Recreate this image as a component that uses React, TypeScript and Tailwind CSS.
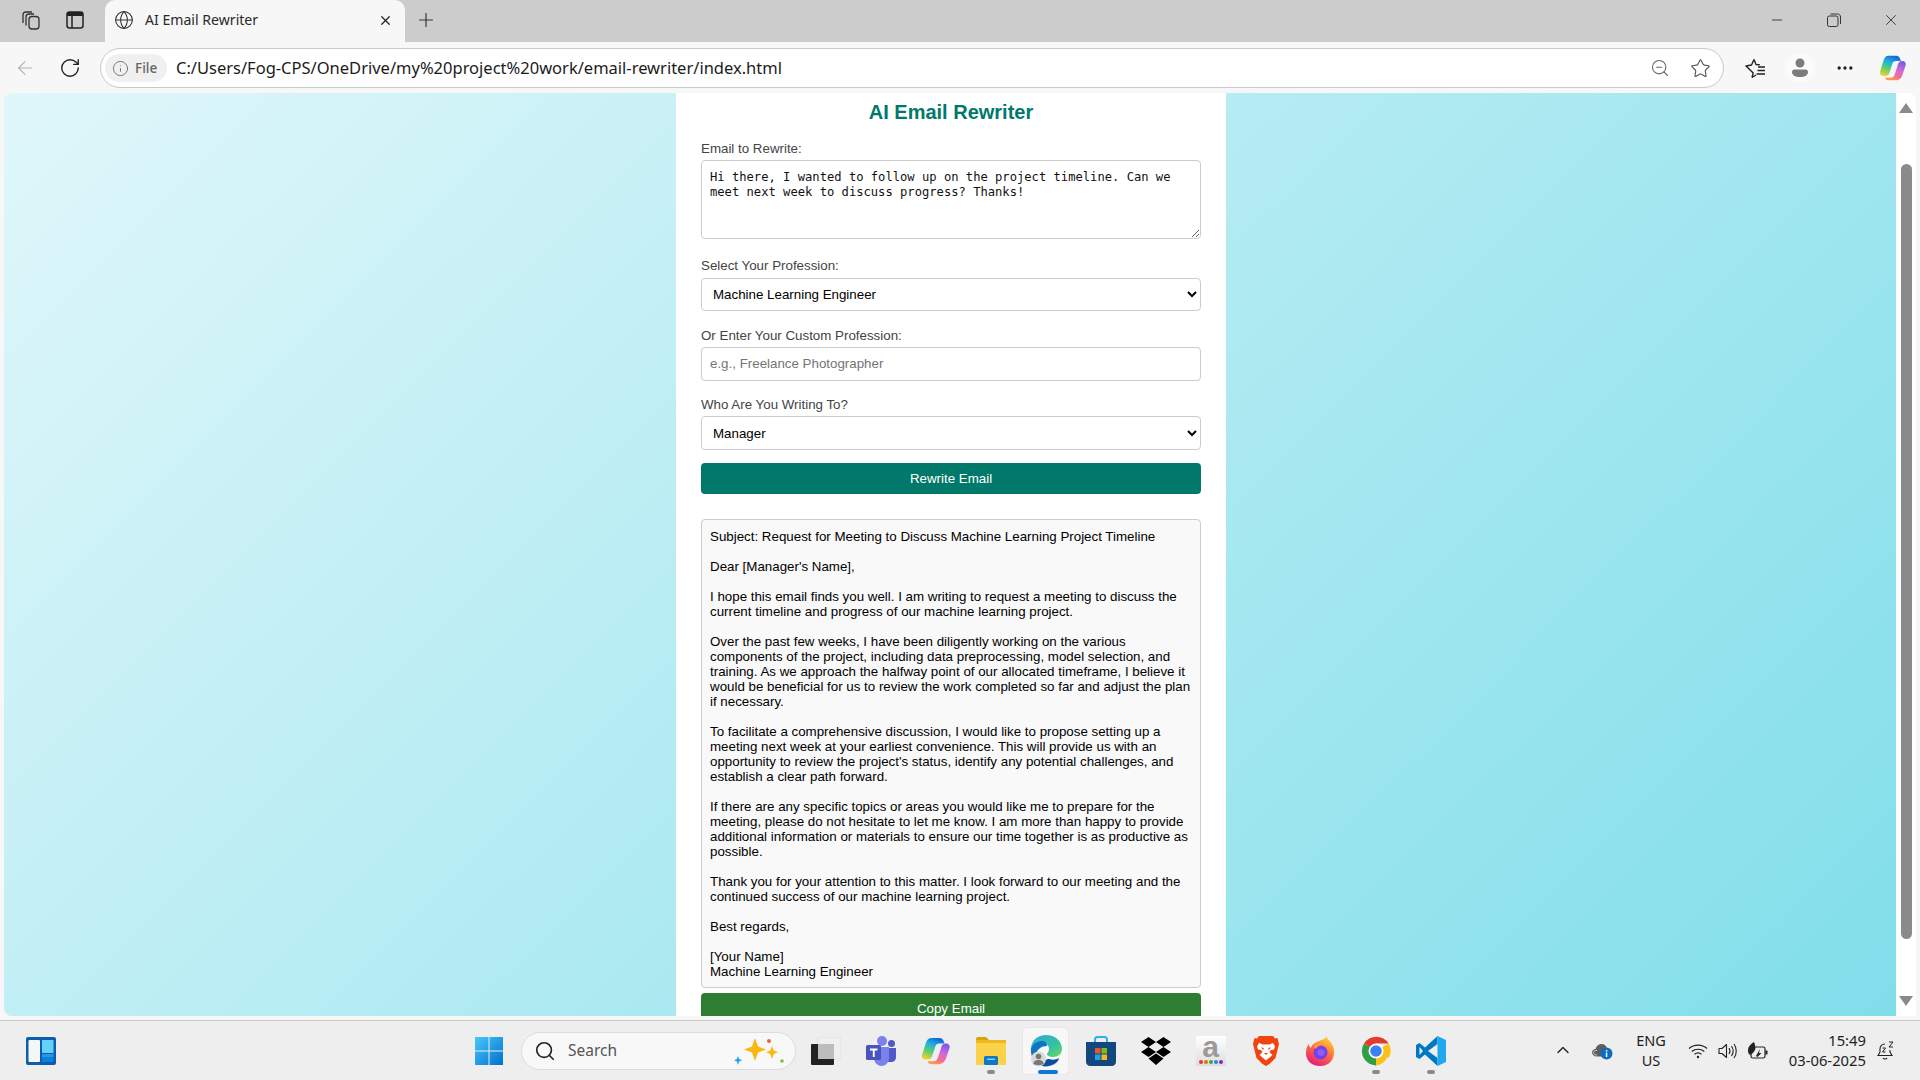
import { ArrowLeft, ChevronUp, Info, MoreHorizontal, Plus, RotateCw, Search, Star, X, ZoomOut, Globe, Minus } from 'lucide-react';

const EMAIL_INPUT =
  'Hi there, I wanted to follow up on the project timeline. Can we meet next week to discuss progress? Thanks!';

const EMAIL_OUTPUT = `Subject: Request for Meeting to Discuss Machine Learning Project Timeline

Dear [Manager's Name],

I hope this email finds you well. I am writing to request a meeting to discuss the current timeline and progress of our machine learning project.

Over the past few weeks, I have been diligently working on the various components of the project, including data preprocessing, model selection, and training. As we approach the halfway point of our allocated timeframe, I believe it would be beneficial for us to review the work completed so far and adjust the plan if necessary.

To facilitate a comprehensive discussion, I would like to propose setting up a meeting next week at your earliest convenience. This will provide us with an opportunity to review the project's status, identify any potential challenges, and establish a clear path forward.

If there are any specific topics or areas you would like me to prepare for the meeting, please do not hesitate to let me know. I am more than happy to provide additional information or materials to ensure our time together is as productive as possible.

Thank you for your attention to this matter. I look forward to our meeting and the continued success of our machine learning project.

Best regards,

[Your Name]
Machine Learning Engineer`;

function CopilotLogo({ size }: { size: number }) {
  return (
    <svg width={size} height={size} viewBox="0 0 32 32">
      <defs>
        <linearGradient id="cpA" x1="0.6" y1="0" x2="0.2" y2="1">
          <stop offset="0" stopColor="#1668d8" />
          <stop offset="0.3" stopColor="#1cb0e0" />
          <stop offset="0.65" stopColor="#5cd06a" />
          <stop offset="1" stopColor="#f8d030" />
        </linearGradient>
        <linearGradient id="cpB" x1="0.7" y1="0" x2="0.3" y2="1">
          <stop offset="0" stopColor="#7a5ce8" />
          <stop offset="0.45" stopColor="#d868d8" />
          <stop offset="0.75" stopColor="#f4708c" />
          <stop offset="1" stopColor="#f8a040" />
        </linearGradient>
      </defs>
      <path d="M11 2h9c2 0 3 1 4 3l1 3h-5c-3 0-4 1-5 4l-3 9c-1 3-2.500 4-5 4H4.500C2 25 .5 23 1 20.500L5 8c1-4 3-6 6-6z" fill="url(#cpA)" />
      <path d="M27 8c2.500 0 4 2 3.500 4.500L27 23c-1 4-4 7-8 7h-8c-2 0-3.500-1-4-3h6c3 0 4-1 5-4l3-9c1-4 2-6 6-6z" fill="url(#cpB)" />
    </svg>
  );
}

function CollectionsIcon() {
  return (
    <svg width="22" height="22" viewBox="0 0 22 22" fill="none" stroke="#333" strokeWidth="1.3">
      <path d="M4 14V6c0-2 1-3 3-3h6" />
      <path d="M7 16.500V8c0-2 1-3 3-3h5" />
      <rect x="10" y="7.500" width="10" height="12.500" rx="3" />
    </svg>
  );
}

function VerticalTabsIcon() {
  return (
    <svg width="18" height="18" viewBox="0 0 18 18">
      <rect x="1" y="1" width="16" height="16" rx="2.500" fill="none" stroke="#222" strokeWidth="1.500" />
      <path d="M1 3.500a2.500 2.500 0 0 1 2.500-2.500h11a2.500 2.500 0 0 1 2.500 2.500V5H1z" fill="#222" />
      <path d="M6 5v12" stroke="#222" strokeWidth="1.500" />
    </svg>
  );
}

function RestoreIcon() {
  return (
    <svg width="14" height="14" viewBox="0 0 14 14" fill="none" stroke="#333" strokeWidth="1">
      <rect x="0.500" y="3" width="10.500" height="10.500" rx="1.800" />
      <path d="M3.500 1h7c1.800 0 3 1.200 3 3v7" />
    </svg>
  );
}

function FavoritesIcon() {
  return (
    <svg width="21" height="21" viewBox="0 0 21 21" fill="none" stroke="#222" strokeWidth="1.400" strokeLinejoin="round">
      <path d="M9 1.500l2 5 3.800.3M7 19.500l1.200-4.500L1 8l5.500-1L9 1.500" />
      <path d="M7 19.500l4-2.500" />
      <path d="M13 9h7M12.500 12.500h7.500M11.500 16h8.500" />
    </svg>
  );
}

function ProfileBadge() {
  return (
    <div className="flex h-[28px] w-[28px] items-center justify-center rounded-full bg-[#fbfbfb]">
      <svg width="16" height="20" viewBox="0 0 16 20" fill="#7c7c7c">
        <circle cx="8" cy="5" r="4.500" />
        <path d="M0 14c0-1.500 1-2.500 2.500-2.500h11c1.500 0 2.500 1 2.500 2.500 0 3-3 5-8 5s-8-2-8-5z" />
      </svg>
    </div>
  );
}

function WidgetsIcon() {
  return (
    <svg width="30" height="28" viewBox="0 0 30 28">
      <rect width="30" height="28" rx="2" fill="#0c5ea8" />
      <rect x="2.500" y="3" width="11.500" height="22" rx="1" fill="#f4f6f8" />
      <rect x="16" y="3" width="11.500" height="13" fill="#66d0fb" />
      <rect x="16" y="17" width="11.500" height="3.500" fill="#1e9bf0" />
      <rect x="16" y="21" width="11.500" height="4" fill="#0a80e0" />
    </svg>
  );
}

function StartIcon() {
  return (
    <svg width="30" height="30" viewBox="0 0 30 30">
      <defs>
        <linearGradient id="st" x1="0" y1="0" x2="1" y2="1">
          <stop offset="0" stopColor="#48c8fa" />
          <stop offset="1" stopColor="#0070cf" />
        </linearGradient>
      </defs>
      <path d="M1 1h13.500v13.500H1zM15.500 1H29v13.500H15.500zM1 15.500h13.500V29H1zM15.500 15.500H29V29H15.500z" fill="url(#st)" />
    </svg>
  );
}

function SparkleIcon() {
  return (
    <svg width="50" height="30" viewBox="0 0 50 30">
      <path d="M21 2l3 8.500 8 3-8 3-3 8.500-3-8.500-8-3 8-3z" fill="#fbb70d" />
      <path d="M38 10l1.800 4.500 4.200 1.800-4.200 1.800L38 23l-1.800-4.900-4.200-1.800 4.200-1.800z" fill="#fbb70d" />
      <path d="M4 20l1.200 3 3 1.200-3 1.200L4 29l-1.200-3.600-2.800-1.200 2.800-1.200z" fill="#25a5ee" />
      <circle cx="35" cy="5" r="2" fill="#ec6240" />
      <circle cx="48" cy="25" r="1.800" fill="#7cbf3c" />
    </svg>
  );
}

function TaskViewIcon() {
  return (
    <svg width="30" height="28" viewBox="0 0 30 28">
      <rect x="7" y="0" width="23" height="22" rx="1" fill="#efefef" stroke="#dfdfdf" />
      <rect x="0" y="7" width="23" height="21" rx="1" fill="#222" />
      <rect x="7" y="7" width="16" height="15" fill="#bdbdbd" />
    </svg>
  );
}

function TeamsIcon() {
  return (
    <svg width="30" height="30" viewBox="0 0 30 30">
      <circle cx="16" cy="5" r="5" fill="#7b83eb" />
      <circle cx="25.500" cy="7.500" r="3.500" fill="#5059c9" />
      <path d="M20 12h10v9c0 3-2 5-5 5h-5z" fill="#5059c9" />
      <path d="M8 11h15v11c0 4-3 8-7.500 8S8 26 8 22z" fill="#7b83eb" />
      <rect x="0" y="9" width="15" height="15" rx="1.500" fill="#4b53bc" />
      <path d="M4 12.500h7.500v2H8.700V21H6.800v-6.500H4z" fill="#fff" />
    </svg>
  );
}

function ExplorerIcon() {
  return (
    <svg width="30" height="28" viewBox="0 0 30 28">
      <path d="M0 2c0-1 .7-2 2-2h8l3 3h-13z" fill="#d9a208" />
      <path d="M0 3h30v25H0z" fill="#fbd34b" />
      <path d="M0 3h30v3H0z" fill="#eeb91e" />
      <rect x="8" y="19" width="14" height="9" rx="1.500" fill="#0f77c4" />
      <rect x="11" y="21.500" width="8" height="1.500" fill="#7fd0f7" />
    </svg>
  );
}

function EdgeProfileIcon() {
  return (
    <svg width="32" height="32" viewBox="0 0 32 32">
      <defs>
        <linearGradient id="edgeA" x1="0" y1="0" x2="1" y2="1">
          <stop offset="0" stopColor="#30a7e0" />
          <stop offset="0.6" stopColor="#35c1a4" />
          <stop offset="1" stopColor="#6bdc58" />
        </linearGradient>
      </defs>
      <path d="M1 13C2 5 8 0 16 0c9 0 16 6 16 14 0 5-4 8-9 8-3 0-6-1-6-3 0-1 2-2 2-5 0-4-3-6-7-6-5 0-9 2-11 5z" fill="url(#edgeA)" />
      <path d="M1 13c3-5 7-7 11-7 3 0 5 2 5 5-5 0-11 3-11 10 0 4 2 8 6 10C5 29 0 22 1 13z" fill="#1173c4" />
      <path d="M12 31c4 1 10 0 14-3 2-2 3-4 3-5-3 2-7 2-10 1-3 0-6 2-7 7z" fill="#0c4f9e" />
      <circle cx="8.500" cy="24" r="7.500" fill="#d9d9d9" />
      <circle cx="8.500" cy="21.500" r="2.800" fill="#777" />
      <path d="M3.500 29c0-3 2-4 5-4s5 1 5 4c-1.500 1.500-8.500 1.500-10 0z" fill="#777" />
    </svg>
  );
}

function StoreIcon() {
  return (
    <svg width="30" height="30" viewBox="0 0 30 30">
      <path d="M9 6V3.500C9 2 10 1 11.500 1h7C20 1 21 2 21 3.500V6" fill="none" stroke="#25b5ee" strokeWidth="2" />
      <path d="M0 6h30v20c0 2-2 4-4 4H4c-2 0-4-2-4-4z" fill="#13487f" />
      <rect x="9" y="12" width="5.500" height="5.500" fill="#e8552d" />
      <rect x="15.500" y="12" width="5.500" height="5.500" fill="#83b81a" />
      <rect x="9" y="18.500" width="5.500" height="5.500" fill="#1da5e8" />
      <rect x="15.500" y="18.500" width="5.500" height="5.500" fill="#fbb811" />
    </svg>
  );
}

function DropboxIcon() {
  return (
    <svg width="30" height="28" viewBox="0 0 30 28" fill="#000">
      <path d="M7.500 0L15 5 7.500 10 0 5zM22.500 0L30 5l-7.500 5L15 5zM0 15l7.500-5 7.500 5-7.500 5zM22.500 10l7.500 5-7.500 5L15 15zM7.500 21.500L15 16.500l7.500 5L15 28z" />
    </svg>
  );
}

function AmazonTile() {
  return (
    <div className="flex h-[30px] w-[30px] flex-col items-center bg-gradient-to-b from-[#ffffff] to-[#dddddd]">
      <span className="h-[22px] font-['Liberation_Sans',sans-serif] text-[30px] leading-[21px] font-bold text-[#9a9a9a]">a</span>
      <div className="mt-[2px] flex gap-[1px]">
        <span className="h-[4px] w-[4px] rounded-full bg-[#e53935]" />
        <span className="h-[4px] w-[4px] rounded-full bg-[#ef6c00]" />
        <span className="h-[4px] w-[4px] rounded-full bg-[#43a047]" />
        <span className="h-[4px] w-[4px] rounded-full bg-[#1e88e5]" />
        <span className="h-[4px] w-[4px] rounded-full bg-[#8e24aa]" />
      </div>
    </div>
  );
}

function BraveIcon() {
  return (
    <svg width="26" height="30" viewBox="0 0 26 30">
      <path d="M6 0h14l2 2.500 2.500-.5L26 8l-1 4-2.500 10-6 6-3.500 2-3.500-2-6-6L1 12 0 8l1.500-6L4 2.500z" fill="#f1440f" />
      <path d="M6 7l4 1.500h6L20 7l2 3.500-1 3-3 .5-1.500 2 3 3-6.500 5.500L6.500 19l3-3L8 14l-3-.5-1-3z" fill="#fff" />
      <path d="M8 11l3 1.500-1 1.500zM18 11l-3 1.500 1 1.500zM11 17h4l-2 2z" fill="#f1440f" />
    </svg>
  );
}

function FirefoxIcon() {
  return (
    <svg width="29" height="30" viewBox="0 0 29 30">
      <defs>
        <linearGradient id="ffA" x1="0.7" y1="0" x2="0.2" y2="1">
          <stop offset="0" stopColor="#ffd33d" />
          <stop offset="0.45" stopColor="#ff7139" />
          <stop offset="1" stopColor="#e31587" />
        </linearGradient>
      </defs>
      <path d="M20 0c1 3 5 5 7 10 3 8 0 20-13 20C5 30 0 24 0 17c0-4 1-7 3-9 0 2 1 3 2 4 1-4 5-6 8-7 4-1 7-3 7-5z" fill="url(#ffA)" />
      <circle cx="14.500" cy="16.500" r="7" fill="#7542e5" />
      <path d="M8 9c3-2 7-2 9 0-4 0-6 2-7 4-1-1-2-2-2-4z" fill="#ff9a3a" />
      <circle cx="15" cy="16.500" r="3.500" fill="#9059ff" />
    </svg>
  );
}

function ChromeIcon() {
  return (
    <svg width="30" height="30" viewBox="0 0 30 30">
      <path d="M15 15L3 7.500A14.500 14.500 0 0 1 27.600 7.500H15z" fill="#e33b2e" />
      <path d="M15 15h12.600A14.500 14.500 0 0 1 15 29.500z" fill="#fbc116" />
      <path d="M27.600 7.500A14.500 14.500 0 0 1 27.600 22L15 15z" fill="#fbc116" />
      <path d="M15 15v14.500A14.500 14.500 0 0 1 3 7.500z" fill="#2f9e44" />
      <circle cx="15" cy="15" r="7.500" fill="#fff" />
      <circle cx="15" cy="15" r="5.800" fill="#3b82f0" />
    </svg>
  );
}

function VSCodeIcon() {
  return (
    <svg width="30" height="30" viewBox="0 0 30 30">
      <path d="M21.500 0L9 11.500 3.500 7 0 9v12l3.500 2L9 18.500 21.500 30v-8L12 15l9.500-7z" fill="#0078c4" />
      <path d="M3.500 11L7 15l-3.500 4z" fill="#eeeeee" />
      <path d="M21.500 0L30 4v22l-8.500 4z" fill="#1fa8f0" />
    </svg>
  );
}

function CloudInfoIcon() {
  return (
    <svg width="21" height="18" viewBox="0 0 21 18">
      <path d="M5 14.500C2 14.500 0 12.800 0 10.500S1.800 7 3.500 7C4.500 3.500 7 2 9.500 2c3 0 5 2 5.500 4.500 2 .3 3 2 3 3.500v4.500z" fill="#5e5e5e" />
      <path d="M5 13C3 13 1.500 12 1.500 10.500S3 8.500 5 8.500" fill="none" stroke="#cfcfcf" strokeWidth="1" />
      <circle cx="14.500" cy="11.500" r="6" fill="#0f6cbd" />
      <rect x="13.800" y="10.500" width="1.500" height="4.500" fill="#fff" />
      <rect x="13.800" y="8" width="1.500" height="1.500" fill="#fff" />
    </svg>
  );
}

function WifiIcon() {
  return (
    <svg width="20" height="16" viewBox="0 0 20 16" fill="none" stroke="#222" strokeWidth="1.200">
      <path d="M1 5.500c5-4.600 13-4.600 18 0" />
      <path d="M3.800 8.500c3.500-3 9-3 12.500 0" />
      <path d="M6.500 11.300c2-1.600 5-1.600 7 0" />
      <circle cx="10" cy="14" r="1.200" fill="#222" stroke="none" />
    </svg>
  );
}

function VolumeIcon() {
  return (
    <svg width="20" height="16" viewBox="0 0 20 16" fill="none" stroke="#222" strokeWidth="1.100" strokeLinejoin="round">
      <path d="M1 5.500h3L8.500 1.500v13L4 10.500H1z" />
      <path d="M11 5c1.200 1.800 1.200 4.200 0 6" />
      <path d="M13.500 3c2 3 2 7 0 10" />
      <path d="M16 1c3 4 3 10 0 14" />
    </svg>
  );
}

function BatteryIcon() {
  return (
    <svg width="20" height="18" viewBox="0 0 20 18">
      <rect x="3" y="5" width="14" height="11" rx="1.800" fill="none" stroke="#222" strokeWidth="1.200" />
      <rect x="17.500" y="8.500" width="2" height="4" fill="#222" />
      <path d="M0 9C0 4 3 2 6 0c1 3 2 5 1 8-1 2-3 4-5 5-1-1-2-2-2-4z" fill="#222" />
      <path d="M8 14l4-7-1 4h2.500l-4 4z" fill="#222" />
    </svg>
  );
}

function BellSleepIcon() {
  return (
    <svg width="18" height="20" viewBox="0 0 18 20" fill="none" stroke="#222" strokeWidth="1.100">
      <path d="M8 3c-3 0-5 2-5 5v3l-2 3.500h14L13 11V9" />
      <path d="M6 17c.5 1.400 3.500 1.400 4 0" />
      <path d="M5.500 7h3L5.500 11h3" strokeWidth="1" />
      <path d="M12 1h4l-4 5h4" strokeWidth="1" />
    </svg>
  );
}

function TaskSlot({ active, dot, children }: { active?: boolean; dot?: boolean; children: React.ReactNode }) {
  return (
    <div className="relative flex h-[48px] w-[55px] items-center justify-center">
      {active && <div className="absolute inset-x-[4px] inset-y-0 rounded-[5px] border border-[#e8e8e8] bg-[#f7f7f7]" />}
      <div className="relative">{children}</div>
      {active && <div className="absolute bottom-[1px] left-[20px] h-[4px] w-[20px] rounded-full bg-[#0a78d4]" />}
      {dot && <div className="absolute bottom-[1px] left-1/2 h-[4px] w-[8px] -translate-x-1/2 rounded-full bg-[#8a8a8a]" />}
    </div>
  );
}

function TitleBar() {
  return (
    <div className="flex h-[42px] shrink-0 bg-[#cccccc]">
      <div className="ml-[19px] flex h-[40px] w-[22px] items-center"><CollectionsIcon /></div>
      <div className="ml-[25px] flex h-[40px] w-[19px] items-center"><VerticalTabsIcon /></div>
      <div className="ml-[20px] flex h-[42px] w-[300px] items-center rounded-t-[10px] bg-[#f7f7f7] pb-[2px] pl-[9px]">
        <Globe size={20} strokeWidth={1.300} className="text-[#333]" />
        <span className="ml-[11px] font-['Noto_Sans',sans-serif] text-[14.100px] text-[#2a2a2a]">AI Email Rewriter</span>
        <X size={15} strokeWidth={2} className="ml-auto mr-[12px] text-[#222]" />
      </div>
      <div className="ml-[10px] flex h-[40px] items-center"><Plus size={22} strokeWidth={1.300} className="text-[#333]" /></div>
      <div className="ml-auto flex h-[40px] items-center">
        <Minus size={16} strokeWidth={1.200} className="mr-[42px] text-[#222]" />
        <div className="mr-[41px]"><RestoreIcon /></div>
        <X size={18} strokeWidth={1.200} className="mr-[20px] text-[#333]" />
      </div>
    </div>
  );
}

function Toolbar() {
  return (
    <div className="flex h-[51px] shrink-0 items-center bg-[#f7f7f7] pt-[1px]">
      <ArrowLeft size={22} strokeWidth={1.200} className="ml-[14px] text-[#b3b3b3]" />
      <RotateCw size={22} strokeWidth={1.500} className="ml-[23px] text-[#222]" />
      <div className="ml-[19px] flex h-[40px] w-[1624px] items-center rounded-full border border-[#c9c9c9] bg-white pr-[12px] pl-[4px]">
        <div className="flex h-[28px] w-[62px] items-center rounded-full bg-[#f0f0f0] pl-[7px]">
          <Info size={17} strokeWidth={1.200} className="text-[#666]" />
          <span className="ml-[6px] font-['Noto_Sans',sans-serif] text-[13.500px] font-medium text-[#666]">File</span>
        </div>
        <span className="ml-[9px] font-['Noto_Sans',sans-serif] text-[16.500px] text-[#1b1b1b]">C:/Users/Fog-CPS/OneDrive/my%20project%20work/email-rewriter/index.html</span>
        <ZoomOut size={20} strokeWidth={1.300} className="ml-auto text-[#666]" />
        <Star size={21} strokeWidth={1.300} className="ml-[20px] text-[#555]" />
      </div>
      <div className="ml-[21px]"><FavoritesIcon /></div>
      <div className="ml-[20px]"><ProfileBadge /></div>
      <MoreHorizontal size={20} strokeWidth={2} className="ml-[21px] text-[#222]" />
      <div className="ml-[24px]"><CopilotLogo size={28} /></div>
    </div>
  );
}

function EmailCard() {
  return (
    <div className="mx-auto flex h-[1000px] w-[550px] shrink-0 flex-col bg-white px-[25px] pt-[7px] font-['Liberation_Sans',sans-serif] text-[13.330px] leading-[15px]">
      <h1 className="text-center text-[20px] leading-[24px] font-bold text-[#00796b]">AI Email Rewriter</h1>
      <label className="mt-[17px] mb-[4px] block h-[15px] text-[#444]">Email to Rewrite:</label>
      <textarea
        readOnly
        defaultValue={EMAIL_INPUT}
        className="h-[79px] w-full rounded-[4px] border border-[#ccc] bg-white px-[8px] pt-[9px] pb-[5px] font-['DejaVu_Sans_Mono',monospace] text-[12.150px] leading-[15px] text-[#111]"
      />
      <label className="mt-[19px] mb-[5px] block h-[15px] text-[#444]">Select Your Profession:</label>
      <select defaultValue="ml" className="h-[33px] w-full rounded-[4px] border border-[#ccc] bg-white px-[7px] text-[13.330px] text-black">
        <option value="ml">Machine Learning Engineer</option>
      </select>
      <label className="mt-[17px] mb-[4px] block h-[15px] text-[#444]">Or Enter Your Custom Profession:</label>
      <input
        placeholder="e.g., Freelance Photographer"
        className="h-[34px] w-full rounded-[4px] border border-[#ccc] bg-white px-[8px] pb-[1px] text-[13.330px] placeholder:text-[#757575]"
      />
      <label className="mt-[16px] mb-[4px] block h-[15px] text-[#444]">Who Are You Writing To?</label>
      <select defaultValue="manager" className="h-[34px] w-full rounded-[4px] border border-[#ccc] bg-white px-[7px] text-[13.330px] text-black">
        <option value="manager">Manager</option>
      </select>
      <button type="button" className="mt-[13px] h-[31px] w-full rounded-[4px] bg-[#00796b] text-[13.330px] text-white">Rewrite Email</button>
      <div className="mt-[25px] rounded-[4px] border border-[#ccc] bg-[#f9f9f9] px-[8px] pt-[9px] pb-[8px] whitespace-pre-wrap text-black">{EMAIL_OUTPUT}</div>
      <button type="button" className="mt-[5px] h-[31px] w-full shrink-0 rounded-[4px] bg-[#2e7d32] text-[13.330px] text-white">Copy Email</button>
    </div>
  );
}

function PageScrollbar() {
  return (
    <div className="flex w-[20px] shrink-0 flex-col items-center rounded-tr-[8px] bg-white">
      <div className="mt-[10px] h-0 w-0 border-x-[7px] border-b-[10px] border-x-transparent border-b-[#8a8a8a]" />
      <div className="mt-[51px] h-[775px] w-[11px] rounded-full bg-[#8a8a8a]" />
      <div className="mt-[57px] h-0 w-0 border-x-[7px] border-t-[10px] border-x-transparent border-t-[#8a8a8a]" />
    </div>
  );
}

function Taskbar() {
  return (
    <div className="flex h-[60px] shrink-0 items-center border-t border-[#c6c6c6] bg-[#eeeeee]">
      <div className="ml-[26px]"><WidgetsIcon /></div>
      <div className="ml-[418px]"><StartIcon /></div>
      <div className="ml-[17px] flex h-[38px] w-[275px] items-center rounded-full border border-[#dcdcdc] bg-[#f8f8f8] pl-[12px]">
        <Search size={22} strokeWidth={1.800} className="text-[#222]" />
        <span className="ml-[12px] font-['Noto_Sans',sans-serif] text-[15.500px] text-[#555]">Search</span>
        <div className="ml-auto mr-[11px]"><SparkleIcon /></div>
      </div>
      <div className="ml-[2px] flex">
        <TaskSlot><TaskViewIcon /></TaskSlot>
        <TaskSlot><TeamsIcon /></TaskSlot>
        <TaskSlot><CopilotLogo size={30} /></TaskSlot>
        <TaskSlot dot><ExplorerIcon /></TaskSlot>
        <TaskSlot active><EdgeProfileIcon /></TaskSlot>
        <TaskSlot><StoreIcon /></TaskSlot>
        <TaskSlot><DropboxIcon /></TaskSlot>
        <TaskSlot><AmazonTile /></TaskSlot>
        <TaskSlot><BraveIcon /></TaskSlot>
        <TaskSlot><FirefoxIcon /></TaskSlot>
        <TaskSlot dot><ChromeIcon /></TaskSlot>
        <TaskSlot dot><VSCodeIcon /></TaskSlot>
      </div>
      <div className="ml-[95px] pb-[2px]"><ChevronUp size={20} strokeWidth={1.600} className="text-[#222]" /></div>
      <div className="ml-[19px]"><CloudInfoIcon /></div>
      <div className="ml-[21px] flex w-[34px] flex-col items-center pb-[2px] font-['Noto_Sans',sans-serif] text-[14.500px] leading-[20px] text-[#222]">
        <span>ENG</span>
        <span>US</span>
      </div>
      <div className="ml-[20px]"><WifiIcon /></div>
      <div className="ml-[10px]"><VolumeIcon /></div>
      <div className="ml-[10px]"><BatteryIcon /></div>
      <div className="ml-auto flex flex-col items-end pb-[2px] font-['Noto_Sans',sans-serif] text-[14.800px] leading-[20px] text-[#222]">
        <span>15:49</span>
        <span>03-06-2025</span>
      </div>
      <div className="mr-[25px] ml-[11px]"><BellSleepIcon /></div>
    </div>
  );
}

export default function App() {
  return (
    <div className="flex h-screen w-full flex-col overflow-hidden bg-[#f7f7f7]">
      <TitleBar />
      <Toolbar />
      <div className="flex min-h-0 flex-1 pr-[4px] pb-[4px] pl-[4px]">
        <div className="flex min-w-0 flex-1 justify-center overflow-hidden rounded-tl-[8px] rounded-bl-[8px] bg-[linear-gradient(135deg,#e0f7fa,#80deea)] pl-[2px]">
          <EmailCard />
        </div>
        <PageScrollbar />
      </div>
      <Taskbar />
    </div>
  );
}
